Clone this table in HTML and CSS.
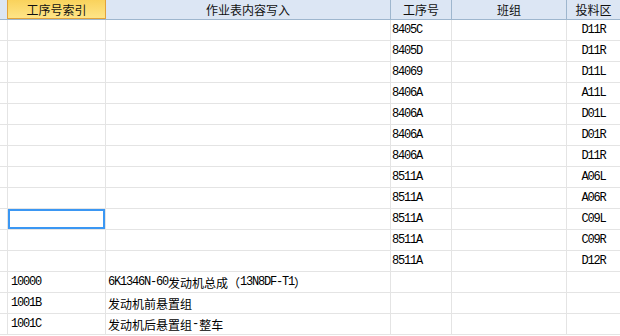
FILE: index.html
```html
<!DOCTYPE html>
<html>
<head>
<meta charset="utf-8">
<link rel="stylesheet" href="styles.css">
</head>
<body>
<div class="sheet">
  <div class="row head">
    <div class="c c0 sel-left"></div>
    <div class="c c1 hsel">工序号索引</div>
    <div class="c c2">作业表内容写入</div>
    <div class="c c3">工序号</div>
    <div class="c c4">班组</div>
    <div class="c c5">投料区</div>
  </div>
  <div class="row"><div class="c c0"></div><div class="c c1"></div><div class="c c2"></div><div class="c c3 m">8405C</div><div class="c c4"></div><div class="c c5 m">D11R</div></div>
  <div class="row"><div class="c c0"></div><div class="c c1"></div><div class="c c2"></div><div class="c c3 m">8405D</div><div class="c c4"></div><div class="c c5 m">D11R</div></div>
  <div class="row"><div class="c c0"></div><div class="c c1"></div><div class="c c2"></div><div class="c c3 m">84069</div><div class="c c4"></div><div class="c c5 m">D11L</div></div>
  <div class="row"><div class="c c0"></div><div class="c c1"></div><div class="c c2"></div><div class="c c3 m">8406A</div><div class="c c4"></div><div class="c c5 m">A11L</div></div>
  <div class="row"><div class="c c0"></div><div class="c c1"></div><div class="c c2"></div><div class="c c3 m">8406A</div><div class="c c4"></div><div class="c c5 m">D01L</div></div>
  <div class="row"><div class="c c0"></div><div class="c c1"></div><div class="c c2"></div><div class="c c3 m">8406A</div><div class="c c4"></div><div class="c c5 m">D01R</div></div>
  <div class="row"><div class="c c0"></div><div class="c c1"></div><div class="c c2"></div><div class="c c3 m">8406A</div><div class="c c4"></div><div class="c c5 m">D11R</div></div>
  <div class="row"><div class="c c0"></div><div class="c c1"></div><div class="c c2"></div><div class="c c3 m">8511A</div><div class="c c4"></div><div class="c c5 m">A06L</div></div>
  <div class="row"><div class="c c0"></div><div class="c c1"></div><div class="c c2"></div><div class="c c3 m">8511A</div><div class="c c4"></div><div class="c c5 m">A06R</div></div>
  <div class="row"><div class="c c0"></div><div class="c c1 active"></div><div class="c c2"></div><div class="c c3 m">8511A</div><div class="c c4"></div><div class="c c5 m">C09L</div></div>
  <div class="row"><div class="c c0"></div><div class="c c1"></div><div class="c c2"></div><div class="c c3 m">8511A</div><div class="c c4"></div><div class="c c5 m">C09R</div></div>
  <div class="row"><div class="c c0"></div><div class="c c1"></div><div class="c c2"></div><div class="c c3 m">8511A</div><div class="c c4"></div><div class="c c5 m">D12R</div></div>
  <div class="row"><div class="c c0"></div><div class="c c1 m">10000</div><div class="c c2 t"><span class="m">6K1346N-60</span>发动机总成（<span class="m">13N8DF-T1</span>）</div><div class="c c3"></div><div class="c c4"></div><div class="c c5"></div></div>
  <div class="row"><div class="c c0"></div><div class="c c1 m">1001B</div><div class="c c2 t">发动机前悬置组</div><div class="c c3"></div><div class="c c4"></div><div class="c c5"></div></div>
  <div class="row"><div class="c c0"></div><div class="c c1 m">1001C</div><div class="c c2 t">发动机后悬置组<span class="m dash">-</span>整车</div><div class="c c3"></div><div class="c c4"></div><div class="c c5"></div></div>
</div>
</body>
</html>
```

FILE: styles.css
```css
html, body {
  margin: 0;
  padding: 0;
  background: #ffffff;
  overflow: hidden;
}
body {
  width: 620px;
  height: 336px;
  font-family: "Noto Sans CJK SC", "Noto Sans", sans-serif;
  font-size: 12px;
  color: #000;
}
.sheet {
  width: 620px;
  overflow: hidden;
}
.row {
  display: flex;
  height: 21px;
  border-bottom: 1px solid #e4e4e4;
  box-sizing: border-box;
}
.c {
  flex: 0 0 auto;
  box-sizing: border-box;
  height: 100%;
  border-right: 1px solid #e4e4e4;
  display: flex;
  align-items: center;
  white-space: nowrap;
  overflow: hidden;
  position: relative;
}
.c0 { width: 8px; }
.c1 { width: 98px; padding-left: 3px; }
.c2 { width: 285px; padding-left: 2px; }
.c3 { width: 61px; padding-left: 1px; }
.c4 { width: 115px; }
.c5 { flex: 1 1 auto; width: 53px; justify-content: center; border-right: none; }

.m {
  font-family: "Liberation Mono", monospace;
  font-size: 12px;
  letter-spacing: -1.2px;
}
.dash { letter-spacing: 0; }
.t { font-size: 12px; }

.head {
  height: 20px;
  background: #dce6f4;
  border-bottom: 1px solid #9eb6ce;
}
.head .c {
  border-right: 1px solid #9eb6ce;
  justify-content: center;
  padding: 0;
  font-size: 12px;
  color: #111;
}
.head .c5 { border-right: none; }
.head .sel-left { border-right-color: #e2a23a; }
.head .hsel {
  background: linear-gradient(#f9d25c, #ffe68a);
  border-right-color: #e2a23a;
  box-shadow: inset 0 -1px 0 #e2a23a;
}
.active::after {
  content: "";
  position: absolute;
  left: 0;
  top: 0;
  width: 97px;
  height: 20px;
  box-sizing: border-box;
  border: 2px solid #3b97f3;
}
```
